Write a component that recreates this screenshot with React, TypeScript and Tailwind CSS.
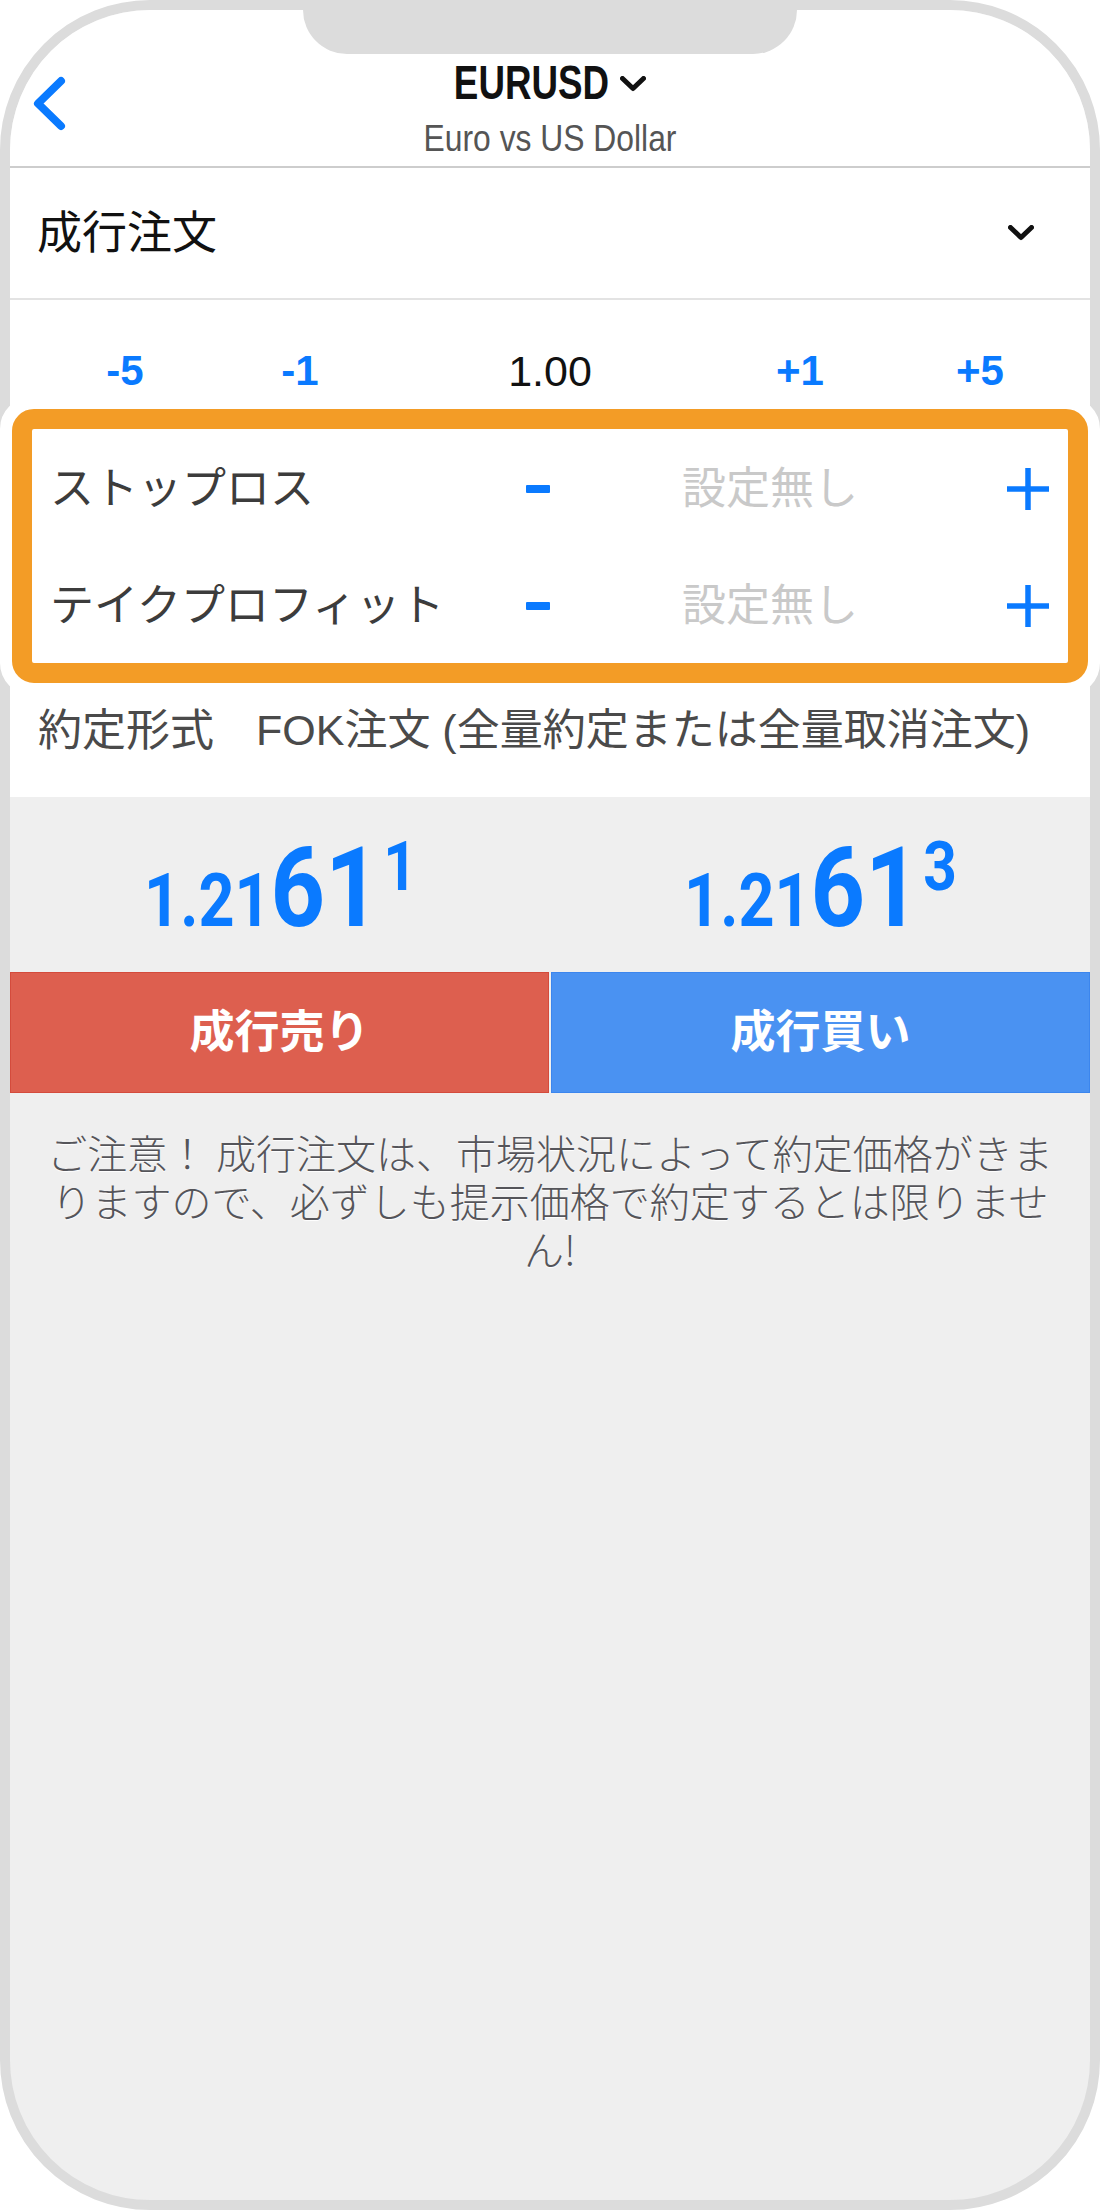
import React from "react";

const BLUE = "text-[#0a7aff]";

function Chevron({ className }: { className?: string }) {
  return (
    <svg viewBox="0 0 26 16" className={className} fill="none">
      <polyline
        points="2.5,2.5 13,12.5 23.5,2.5"
        stroke="currentColor"
        strokeWidth="5"
        strokeLinecap="round"
        strokeLinejoin="round"
      />
    </svg>
  );
}

function Plus() {
  return (
    <svg viewBox="0 0 42 42" className="h-[42px] w-[42px] text-[#0a7aff]">
      <line x1="21" y1="0" x2="21" y2="42" stroke="currentColor" strokeWidth="5.5" />
      <line x1="0" y1="21" x2="42" y2="21" stroke="currentColor" strokeWidth="5.5" />
    </svg>
  );
}

function Minus() {
  return <span className="block h-[8px] w-[24px] rounded-[1px] bg-[#0a7aff]" />;
}

function LevelRow({ label }: { label: string }) {
  return (
    <div className="grid h-[117px] grid-cols-[450px_75px_390px_125px] items-center pl-[40px]">
      <span className="text-[44px] leading-none text-[#3c3c3c]">{label}</span>
      <span className="justify-self-center">
        <Minus />
      </span>
      <span className="text-center text-[44px] leading-none text-[#c9c9c9]">設定無し</span>
      <span className="justify-self-center">
        <Plus />
      </span>
    </div>
  );
}

function Price({ head, big, sup }: { head: string; big: string; sup: string }) {
  return (
    <div className="flex-1 text-center">
      <span className={`inline-block scale-x-[0.85] font-['Roboto'] text-[112px] font-bold leading-none ${BLUE}`}>
        <span className="text-[74px]">{head}</span>
        {big}
        <span className="ml-[4px] align-top text-[69px]">{sup}</span>
      </span>
    </div>
  );
}

export default function App() {
  return (
    <div className="relative h-[2210px] w-[1100px] bg-white font-['Liberation_Sans','Noto_Sans_CJK_JP',sans-serif]">
      <div className="flex h-full flex-col overflow-hidden rounded-[150px] border-[10px] border-[#dcdcdc] bg-[#efefef]">
        {/* nav bar */}
        <div className="grid grid-cols-[1fr_auto_1fr] border-b-2 border-[#cdcdcd] bg-white">
          <div className="self-start pl-[20px] pt-[63px] text-[#0a7aff]">
            <svg viewBox="0 0 40 60" className="h-[60px] w-[40px]" fill="none">
              <polyline
                points="31,8 8,30.5 31,53"
                stroke="currentColor"
                strokeWidth="8"
                strokeLinecap="round"
                strokeLinejoin="round"
              />
            </svg>
          </div>
          <div className="flex flex-col items-center pb-[9px] pt-[48px]">
            <div className="flex items-center">
              <span className="-mx-[26px] inline-block scale-x-[0.75] text-[49px] font-bold leading-none text-[#111]">
                EURUSD
              </span>
              <Chevron className="ml-[12px] mt-[2px] h-[16px] w-[26px] text-[#111]" />
            </div>
            <span className="-mx-[21px] mt-[13px] inline-block scale-x-[0.86] text-[37px] leading-none text-[#555]">
              Euro vs US Dollar
            </span>
          </div>
          <div />
        </div>

        {/* order type */}
        <div className="flex h-[132px] items-center justify-between border-b-2 border-[#e3e3e3] bg-white pl-[27px] pr-[56px]">
          <span className="text-[45px] leading-none text-[#111]">成行注文</span>
          <Chevron className="h-[16px] w-[26px] text-[#111]" />
        </div>

        {/* lot size */}
        <div className="grid h-[130px] grid-cols-[230px_120px_1fr_120px_230px] items-center bg-white pt-[12px] text-center text-[42px] leading-none">
          <span className={`font-bold ${BLUE}`}>-5</span>
          <span className={`font-bold ${BLUE}`}>-1</span>
          <span className="text-[43px] text-[#111]">1.00</span>
          <span className={`font-bold ${BLUE}`}>+1</span>
          <span className={`pl-[10px] font-bold ${BLUE}`}>+5</span>
        </div>

        <div className="bg-white">
          <LevelRow label="ストップロス" />
          <LevelRow label="テイクプロフィット" />
        </div>

        {/* fill policy */}
        <div className="flex h-[133px] items-center bg-white pl-[28px] leading-none text-[#4a4a4a]">
          <span className="text-[44px]">約定形式</span>
          <span className="ml-[42px] text-[43px]">FOK注文 (全量約定または全量取消注文)</span>
        </div>

        {/* quotes */}
        <div className="flex pb-[28px] pt-[35px]">
          <Price head="1.21" big="61" sup="1" />
          <Price head="1.21" big="61" sup="3" />
        </div>

        <div className="flex h-[121px] gap-[2px] text-[45px] font-bold text-white">
          <button className="flex flex-1 items-center justify-center border border-[#d44b3c] bg-[#dd5f4f]">
            成行売り
          </button>
          <button className="flex flex-1 items-center justify-center border border-[#3c86ee] bg-[#4a92f2]">
            成行買い
          </button>
        </div>

        <p className="mt-[35px] px-[30px] text-center font-['Noto_Sans_CJK_JP',sans-serif] text-[40px] font-light leading-[48px] text-[#55555a] [text-shadow:0_1px_1px_#fff]">
          ご注意！ 成行注文は、市場状況によって約定価格がきまりますので、必ずしも提示価格で約定するとは限りません!
        </p>
      </div>

      {/* notch */}
      <div className="absolute left-[303px] top-0 h-[54px] w-[494px] rounded-b-[44px] bg-[#dcdcdc]" />

      {/* highlight */}
      <div className="pointer-events-none absolute left-0 top-[397px] h-[298px] w-[1100px] rounded-[32px] border-[12px] border-white">
        <div className="h-full rounded-[22px] border-[20px] border-[#f39c26]" />
      </div>
    </div>
  );
}
